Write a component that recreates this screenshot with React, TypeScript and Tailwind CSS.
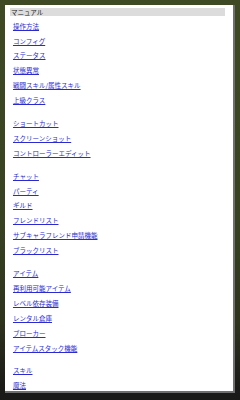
import React from 'react';

const groups: string[][] = [
  ['操作方法', 'コンフィグ', 'ステータス', '状態異常', '戦闘スキル/属性スキル', '上級クラス'],
  ['ショートカット', 'スクリーンショット', 'コントローラーエディット'],
  ['チャット', 'パーティ', 'ギルド', 'フレンドリスト', 'サブキャラフレンド申請機能', 'ブラックリスト'],
  ['アイテム', '再利用可能アイテム', 'レベル依存装備', 'レンタル倉庫', 'ブローカー', 'アイテムスタック機能'],
  ['スキル', '魔法'],
];

export default function App() {
  return (
    <div
      className="w-[240px] h-[400px] overflow-hidden bg-[linear-gradient(180deg,#3f4a24_0%,#384222_55%,#2e331c_80%,#1a1a18_97%)] pt-[5px] pl-[5px]"
      style={{ fontFamily: '"Noto Sans CJK JP", "Noto Sans", sans-serif' }}
    >
      <div className="w-[230px] h-[388px] bg-white border-r-2 border-b-2 border-[#6f6f6f] pt-[3px] pl-[5px]">
        <div className="w-[215px] h-[8px] bg-[#dcdcdc] flex items-center pl-[1px] text-[6.5px] leading-none text-[#222]">
          マニュアル
        </div>
        <div className="mt-[2.5px] pl-[3px]">
          {groups.map((g, gi) => (
            <ul key={gi} className={gi > 0 ? 'mt-[8px]' : ''}>
              {g.map((t) => (
                <li key={t} className="h-[14.9px] flex items-center">
                  <a className="text-[6.5px] leading-none text-[#2a2ad0] underline underline-offset-[1px]">{t}</a>
                </li>
              ))}
            </ul>
          ))}
        </div>
      </div>
    </div>
  );
}
